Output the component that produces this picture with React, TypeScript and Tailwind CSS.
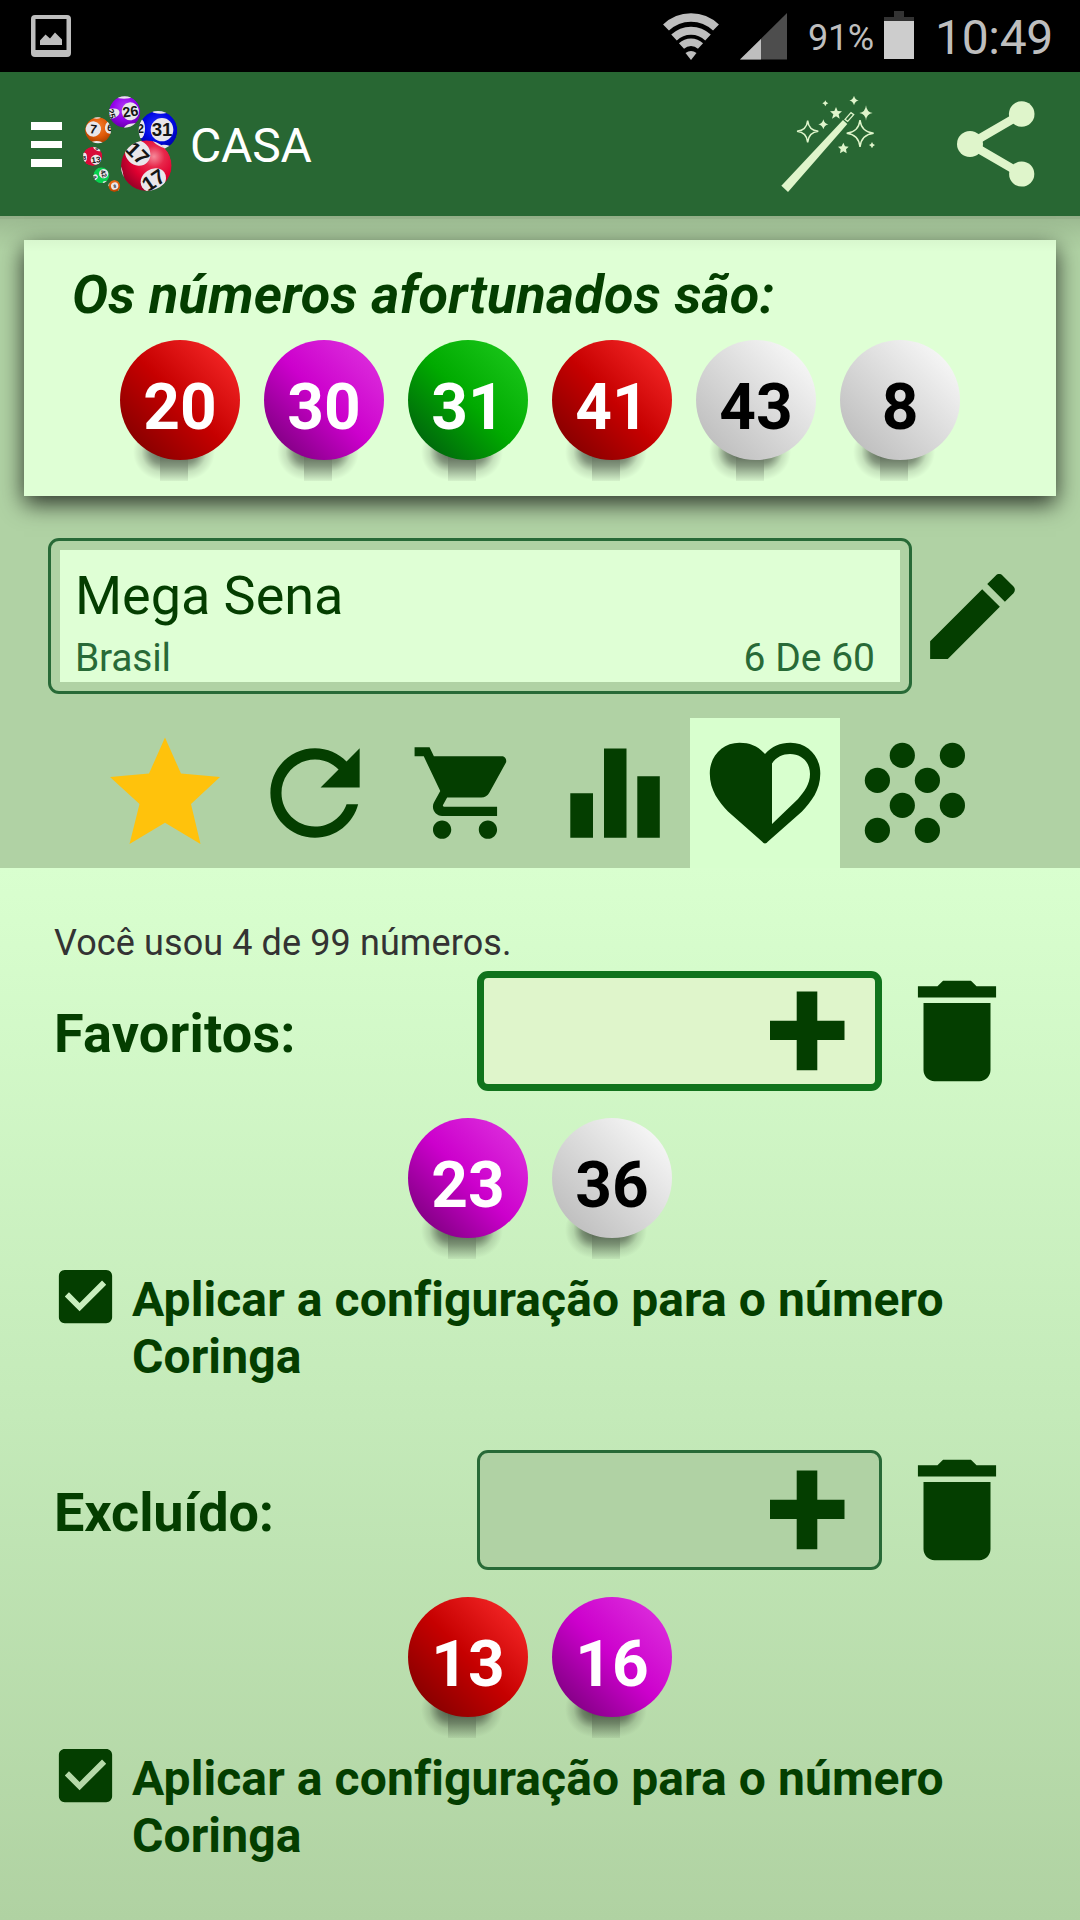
import React from "react";

type BallColor = "red" | "magenta" | "green" | "white";

const ballFill: Record<BallColor, string> = {
  red: "bg-[linear-gradient(45deg,#730000_0%,#c60000_50%,#ff3030_100%)] text-white",
  magenta: "bg-[linear-gradient(45deg,#6c006e_0%,#cc00cc_50%,#e038e0_100%)] text-white",
  green: "bg-[linear-gradient(45deg,#005210_0%,#00aa00_50%,#20cc20_100%)] text-white",
  white: "bg-[linear-gradient(45deg,#b6b6b6_0%,#dadada_50%,#ffffff_100%)] text-black",
};

function BallShadowDefs() {
  return (
    <svg className="absolute h-0 w-0" aria-hidden="true">
      <defs>
        <linearGradient id="shadeMid" x1="0" y1="0" x2="0" y2="1">
          <stop offset="0" stopColor="#000" stopOpacity="0.6" />
          <stop offset="0.45" stopColor="#000" stopOpacity="0.4" />
          <stop offset="1" stopColor="#000" stopOpacity="0.05" />
        </linearGradient>
        <radialGradient id="shadeLeft" gradientUnits="userSpaceOnUse" cx="41" cy="12" r="28">
          <stop offset="0" stopColor="#000" stopOpacity="0.6" />
          <stop offset="0.4" stopColor="#000" stopOpacity="0.4" />
          <stop offset="0.7" stopColor="#000" stopOpacity="0.12" />
          <stop offset="1" stopColor="#000" stopOpacity="0" />
        </radialGradient>
        <radialGradient id="shadeRight" gradientUnits="userSpaceOnUse" cx="67" cy="12" r="28">
          <stop offset="0" stopColor="#000" stopOpacity="0.6" />
          <stop offset="0.4" stopColor="#000" stopOpacity="0.4" />
          <stop offset="0.7" stopColor="#000" stopOpacity="0.12" />
          <stop offset="1" stopColor="#000" stopOpacity="0" />
        </radialGradient>
      </defs>
    </svg>
  );
}

function Ball({ n, color }: { n: number; color: BallColor }) {
  return (
    <div className="relative isolate size-[120px]">
      <svg className="absolute top-[100px] left-0 -z-10" width="120" height="41" viewBox="0 0 120 41">
        <rect x="0" y="0" width="40" height="41" fill="url(#shadeLeft)" />
        <rect x="40" y="14" width="28" height="27" fill="url(#shadeMid)" />
        <rect x="68" y="0" width="52" height="41" fill="url(#shadeRight)" />
      </svg>
      <div className={"size-[120px] rounded-full text-center text-[64px] leading-[136px] font-bold " + ballFill[color]}>
        {n}
      </div>
    </div>
  );
}

function StatusBar() {
  return (
    <div className="flex h-[72px] items-start bg-black text-[#bebebe]">
      <svg className="mt-[15px] ml-[31px]" width="40" height="42" viewBox="0 0 40 42">
        <path
          fill="currentColor"
          fillRule="evenodd"
          d="M4 0h32a4 4 0 0 1 4 4v34a4 4 0 0 1-4 4H4a4 4 0 0 1-4-4V4a4 4 0 0 1 4-4zM4.500 4v31h31V4zM9 30v-4.500l5.500-6 4.500 4 5-6 7 7V30z"
        />
      </svg>
      <svg className="mt-3 ml-[592px]" width="56" height="48" viewBox="0 0 56 48">
        <g fill="none" stroke="currentColor">
          <path d="M3 15.500a36 36 0 0 1 50 0" strokeWidth="8.500" />
          <path d="M11 25.500a24.500 24.500 0 0 1 34 0" strokeWidth="8" />
          <path d="M18.500 34a14 14 0 0 1 19 0" strokeWidth="7.500" />
        </g>
        <path fill="currentColor" d="M28 48l-5.500-7a9 9 0 0 1 11 0z" />
      </svg>
      <svg className="mt-[13px] ml-[21px]" width="47" height="47" viewBox="0 0 47 47">
        <path fill="#4d4d4d" d="M47 0v46.500H0z" />
        <path fill="#bebebe" d="M21 26v20.500H0z" />
      </svg>
      <div className="mt-[17px] ml-[21px] w-[66px] text-[36px] leading-[42px] tracking-[-0.300px] whitespace-nowrap">91%</div>
      <svg className="mt-[11px] ml-[10px]" width="30" height="48" viewBox="0 0 30 48">
        <path fill="#333" d="M10 0h10v6h10v4H0V6h10z" />
        <path fill="#cdcdcd" d="M0 10h30v38H0z" />
      </svg>
      <div className="mt-[10px] ml-[21px] text-[48px] leading-[56px] tracking-[-0.300px] whitespace-nowrap">10:49</div>
    </div>
  );
}

function LogoBall({
  cx,
  cy,
  r,
  fill,
  spots,
}: {
  cx: number;
  cy: number;
  r: number;
  fill: string;
  spots: { x: number; y: number; rx: number; ry: number; rot?: number; t?: string; size?: number }[];
}) {
  const id = "clip" + cx;
  return (
    <g>
      <clipPath id={id}>
        <circle cx={cx} cy={cy} r={r} />
      </clipPath>
      <g clipPath={`url(#${id})`}>
        <circle cx={cx} cy={cy} r={r} fill={fill} />
        {spots.map((s, i) => (
          <g key={i} transform={`translate(${s.x} ${s.y}) rotate(${s.rot ?? 0})`}>
            <ellipse rx={s.rx} ry={s.ry} fill="#e9e6ea" />
            {s.t && (
              <text
                y={(s.size ?? 20) * 0.36}
                textAnchor="middle"
                fontSize={s.size}
                fontWeight="700"
                fill="#151515"
                fontFamily="Liberation Sans, sans-serif"
              >
                {s.t}
              </text>
            )}
          </g>
        ))}
      </g>
    </g>
  );
}

function Logo() {
  return (
    <svg width="104" height="104" viewBox="0 0 312 312">
      <defs>
        <radialGradient id="gRed" cx="0.65" cy="0.32" r="0.7">
          <stop offset="0" stopColor="#f58a9a" />
          <stop offset="0.3" stopColor="#e8274a" />
          <stop offset="0.65" stopColor="#df0030" />
          <stop offset="1" stopColor="#a00028" />
        </radialGradient>
        <radialGradient id="gBlue" cx="0.5" cy="0.4" r="0.62">
          <stop offset="0" stopColor="#2a35ff" />
          <stop offset="0.6" stopColor="#0008e4" />
          <stop offset="1" stopColor="#0000a0" />
        </radialGradient>
        <radialGradient id="gPurple" cx="0.5" cy="0.35" r="0.65">
          <stop offset="0" stopColor="#b23cf8" />
          <stop offset="0.6" stopColor="#9200ea" />
          <stop offset="1" stopColor="#6a00ae" />
        </radialGradient>
        <radialGradient id="gOrange" cx="0.5" cy="0.35" r="0.65">
          <stop offset="0" stopColor="#f58030" />
          <stop offset="0.6" stopColor="#e05a08" />
          <stop offset="1" stopColor="#a84000" />
        </radialGradient>
      </defs>
      <LogoBall cx={109} cy={282} r={18} fill="url(#gOrange)" spots={[
        { x: 110, y: 282, rx: 11, ry: 11, rot: -10, t: "8", size: 14 },
        { x: 91, y: 276, rx: 3, ry: 7 },
        { x: 126, y: 294, rx: 4, ry: 6, rot: 40 },
      ]} />
      <LogoBall cx={70} cy={250} r={24} fill="#08d050" spots={[
        { x: 77, y: 245, rx: 14, ry: 14, rot: 70, t: "42", size: 20 },
        { x: 50, y: 256, rx: 8, ry: 10, rot: 60, t: "4", size: 16 },
        { x: 82, y: 272, rx: 8, ry: 5 },
      ]} />
      <LogoBall cx={44} cy={193} r={29} fill="#d80a38" spots={[
        { x: 54, y: 203, rx: 16, ry: 15, rot: -8, t: "13", size: 25 },
        { x: 19, y: 196, rx: 8, ry: 14, t: "8", size: 18 },
        { x: 58, y: 168, rx: 13, ry: 8, rot: 30, t: "8", size: 16 },
      ]} />
      <LogoBall cx={60} cy={115} r={39} fill="url(#gOrange)" spots={[
        { x: 46, y: 111, rx: 23, ry: 23, rot: 8, t: "7", size: 38 },
        { x: 96, y: 106, rx: 15, ry: 19, rot: 10, t: "6", size: 30 },
        { x: 56, y: 155, rx: 19, ry: 8 },
        { x: 56, y: 76, rx: 12, ry: 4 },
      ]} />
      <LogoBall cx={140} cy={60} r={47} fill="url(#gPurple)" spots={[
        { x: 157, y: 58, rx: 26, ry: 27, rot: -8, t: "26", size: 43 },
        { x: 101, y: 65, rx: 15, ry: 24, rot: 75, t: "25", size: 27 },
        { x: 138, y: 15, rx: 22, ry: 5 },
        { x: 158, y: 102, rx: 20, ry: 7, rot: -15 },
      ]} />
      <LogoBall cx={240} cy={115} r={58} fill="url(#gBlue)" spots={[
        { x: 252, y: 113, rx: 34, ry: 35, t: "31", size: 56 },
        { x: 188, y: 110, rx: 13, ry: 29, t: "2", size: 36 },
        { x: 248, y: 59, rx: 25, ry: 6 },
        { x: 258, y: 168, rx: 22, ry: 10 },
      ]} />
      <LogoBall cx={205} cy={221} r={76} fill="url(#gRed)" spots={[
        { x: 179, y: 183, rx: 40, ry: 36, rot: 45, t: "17", size: 62 },
        { x: 226, y: 264, rx: 40, ry: 33, rot: -34, t: "17", size: 62 },
        { x: 128, y: 240, rx: 6, ry: 24, rot: -14 },
        { x: 246, y: 155, rx: 27, ry: 7, rot: 30 },
      ]} />
    </svg>
  );
}

function Wand() {
  return (
    <svg width="108" height="106" viewBox="0 0 324 318" fill="#dff5cb">
      <path d="M16 287L201 90l13 12L36 306z" />
      <path d="M207 88l18-20 8 6-18 20z" fill="none" stroke="#dff5cb" strokeWidth="4" />
      <path
        d="M95 92q3 29 32 32-29 3-32 33-3-30-32-33 29-3 32-32zM252 90q4 36 41 40-37 4-41 41-4-37-40-41 36-4 40-40z"
        fill="none"
        stroke="#dff5cb"
        strokeWidth="4.500"
      />
      <path d="M142 88q3 13 15 15-12 3-15 15-3-12-15-15 12-2 15-15zM234 17q3 12 14 14-11 3-14 15-3-12-14-15 11-2 14-14zM270 46q2 21 20 23-18 2-20 23-2-21-20-23 18-2 20-23zM148 31q2 8 9 9-7 1-9 9-2-8-9-9 7-1 9-9zM288 156q2 8 9 9-7 2-9 10-2-8-9-10 7-1 9-9z" />
      <path d="M180 51l5 12 13 1-10 9 3 13-11-7-12 7 4-13-10-9 13-1zM202 158l5 11 11 1-8 8 2 12-10-6-10 6 2-12-8-8 11-1z" />
    </svg>
  );
}

function AppBar() {
  return (
    <header className="relative z-10 flex h-36 items-start bg-[#286733] text-white">
      <div className="mt-[50px] ml-[31px] flex w-[31px] flex-col gap-[11px]">
        <span className="h-[7.500px] bg-white" />
        <span className="h-[7.500px] bg-white" />
        <span className="h-[7.500px] bg-white" />
      </div>
      <div className="mt-5 ml-4">
        <Logo />
      </div>
      <h1 className="mt-[46px] ml-[8px] w-[586px] text-[48px] leading-[56px] tracking-[-0.200px]">CASA</h1>
      <div className="mt-[18px]">
        <Wand />
      </div>
      <svg className="mt-[29px] ml-[73px]" width="78" height="86" viewBox="0 0 78 86">
        <path d="M64.700 13L13 43l51.700 30" fill="none" stroke="#dff5cb" strokeWidth="8.500" />
        <g fill="#dff5cb">
          <circle cx="64.700" cy="13" r="12.800" />
          <circle cx="13" cy="43" r="13" />
          <circle cx="64.700" cy="73" r="12.600" />
        </g>
      </svg>
      <div className="pointer-events-none absolute top-full left-0 h-[36px] w-full bg-[linear-gradient(to_bottom,rgba(0,0,0,0.12),rgba(0,0,0,0.04)_60%,rgba(0,0,0,0))]" />
      <div className="pointer-events-none absolute top-full left-0 h-[3px] w-full bg-black/5" />
    </header>
  );
}

function Tabs() {
  const cell = "flex h-[150px] w-[150px] items-center justify-center";
  return (
    <nav className="mt-6 ml-[90px] flex text-[#043e00]">
      <div className={cell}>
        <svg width="150" height="150" viewBox="0 0 150 150">
          <path fill="#ffc20c" d="M75 19.500L91 55.600 130 59 101 86 110.500 126 75 104.700 39.500 126 49.500 86 20 59 59 55.600z" />
        </svg>
      </div>
      <div className={cell}>
        <svg width="134" height="134" viewBox="0 0 24 24" fill="currentColor">
          <path d="M17.650 6.350C16.200 4.900 14.210 4 12 4c-4.420 0-7.990 3.580-7.990 8s3.570 8 7.990 8c3.730 0 6.840-2.550 7.730-6h-2.080c-.82 2.330-3.040 4-5.650 4-3.310 0-6-2.690-6-6s2.690-6 6-6c1.660 0 3.140.69 4.220 1.780L13 11h7V4l-2.350 2.350z" />
        </svg>
      </div>
      <div className={cell}>
        <svg width="110" height="110" viewBox="0 0 24 24" fill="currentColor">
          <path d="M7 18c-1.100 0-1.990.9-1.990 2S5.900 22 7 22s2-.9 2-2-.9-2-2-2zM1 2v2h2l3.600 7.590-1.350 2.450c-.16.280-.25.610-.25.960 0 1.100.9 2 2 2h12v-2H7.420c-.14 0-.25-.11-.25-.25l.03-.12.900-1.630h7.450c.75 0 1.410-.41 1.750-1.030l3.580-6.490c.08-.14.120-.31.120-.48 0-.55-.45-1-1-1H5.210l-.94-2H1zm16 16c-1.100 0-1.990.9-1.990 2s.89 2 1.990 2 2-.9 2-2-.9-2-2-2z" />
        </svg>
      </div>
      <div className={cell}>
        <svg width="150" height="150" viewBox="0 0 150 150" fill="currentColor">
          <path d="M30.300 75.200H53v44.600H30.300zM64 30.500h22.500v89.300H64zM97.300 58.300h22.500v61.500H97.300z" />
        </svg>
      </div>
      <div className={cell + " bg-[#d8ffce]"}>
        <svg width="150" height="150" viewBox="0 0 150 150" fill="currentColor">
          <path
            fillRule="evenodd"
            d="M75 36C68 28 60 24.700 49.500 24.700 32 24.700 19.800 38.500 19.800 55.500c0 17 9 28 18.200 38L72 123.500q3 4 6 0l34-30c9.200-10 18.300-21 18.300-38C130.300 38.500 118 24.700 100.500 24.700 90 24.700 82 28 75 36zM82 45.500C86 39 93 36 100 36c12 0 20 8.500 20 20 0 10-6 18-12 25L82 106z"
          />
        </svg>
      </div>
      <div className={cell}>
        <svg width="150" height="150" viewBox="0 0 150 150" fill="currentColor">
          <circle cx="62.300" cy="37.400" r="12.600" />
          <circle cx="112.400" cy="37.400" r="12.600" />
          <circle cx="37.400" cy="62.400" r="12.600" />
          <circle cx="87.400" cy="62.400" r="12.600" />
          <circle cx="62.300" cy="87.400" r="12.600" />
          <circle cx="112.400" cy="87.400" r="12.600" />
          <circle cx="37.400" cy="112.400" r="12.600" />
          <circle cx="87.400" cy="112.400" r="12.600" />
        </svg>
      </div>
    </nav>
  );
}

function NumberGroup({
  label,
  labelClass,
  focused,
  balls,
}: {
  label: string;
  labelClass: string;
  focused: boolean;
  balls: { n: number; color: BallColor }[];
}) {
  return (
    <section className="h-[479px] text-[#043e00]">
      <div className="flex h-[120px] pl-[54px]">
        <div className={"w-[423px] pt-[3px] text-[54px] leading-[120px] font-bold " + labelClass}>{label}</div>
        <div
          className={
            "flex h-[120px] w-[405px] justify-end rounded-[11px] " +
            (focused ? "border-[7px] border-[#10731c] bg-[#dff5cb] pt-[13px] pr-[30px]" : "border-[3px] border-[#286a37] bg-[#b0d2a4] pt-[17px] pr-[34px]")
          }
        >
          <svg width="75" height="80" viewBox="0 0 75 80" fill="currentColor">
            <path d="M26.700.4h20.600v29.300H74.500v19.300H47.300v30.300H26.700V49H-.3V29.700h27z" />
          </svg>
        </div>
        <svg className="-mt-[7px] ml-[8px] shrink-0" width="134" height="134" viewBox="0 0 24 24" fill="currentColor">
          <path d="M6 19c0 1.100.9 2 2 2h8c1.100 0 2-.9 2-2V7H6v12zM19 4h-3.500l-1-1h-5l-1 1H5v2h14V4z" />
        </svg>
      </div>
      <div className="mt-[27px] flex justify-center gap-6">
        {balls.map((b) => (
          <Ball key={b.n} n={b.n} color={b.color} />
        ))}
      </div>
      <div className="mt-[23px] flex pl-[50px]">
        <svg width="71" height="71" viewBox="0 0 24 24" fill="currentColor">
          <path d="M19 3H5c-1.110 0-2 .9-2 2v14c0 1.100.89 2 2 2h14c1.110 0 2-.9 2-2V5c0-1.100-.89-2-2-2zm-9 14l-5-5 1.410-1.410L10 14.170l7.590-7.590L19 8l-9 9z" />
        </svg>
        <p className="mt-[10px] ml-[11px] w-[860px] text-[48px] leading-[57px] font-bold tracking-[0.090px] [font-variant-ligatures:common-ligatures]">
          Aplicar a configuração para o número
          <br />
          Coringa
        </p>
      </div>
    </section>
  );
}

const drawn: { n: number; color: BallColor }[] = [
  { n: 20, color: "red" },
  { n: 30, color: "magenta" },
  { n: 31, color: "green" },
  { n: 41, color: "red" },
  { n: 43, color: "white" },
  { n: 8, color: "white" },
];

export default function App() {
  return (
    <div className="h-[1920px] w-[1080px] overflow-hidden bg-[#b0d2a4] font-['Roboto',sans-serif]">
      <BallShadowDefs />
      <StatusBar />
      <AppBar />
      <div className="h-[652px] pt-6">
        <div className="mx-6 h-64 bg-[#dfffd5] shadow-[0_8px_22px_rgba(0,0,0,0.75)]">
          <h2 className="pt-[23px] pl-12 text-[54px] leading-[64px] font-bold tracking-[0.220px] whitespace-nowrap text-[#043e00] italic">
            Os números afortunados são:
          </h2>
          <div className="mt-[13px] flex justify-center gap-6">
            {drawn.map((b) => (
              <Ball key={b.n} n={b.n} color={b.color} />
            ))}
          </div>
        </div>
        <div className="mt-[42px] flex pl-12">
          <div className="h-[156px] w-[864px] rounded-[11px] border-[3px] border-[#286a37] p-[9px]">
            <div className="h-[132px] bg-[#dfffd5] pr-[25px] pl-[15px]">
              <div className="pt-[14px] text-[54px] leading-[64px] tracking-[-0.050px] text-[#043e00]">Mega Sena</div>
              <div className="flex justify-between text-[39px] leading-[61px] text-[#286a37]">
                <span className="tracking-[-0.200px]">Brasil</span>
                <span>6 De 60</span>
              </div>
            </div>
          </div>
          <svg className="mt-[22px] ml-[4px] text-[#043e00]" width="113" height="113" viewBox="0 0 24 24" fill="currentColor">
            <path d="M3 17.250V21h3.750L17.810 9.940l-3.750-3.750L3 17.250zM20.710 7.040c.39-.39.39-1.020 0-1.410l-2.340-2.340c-.39-.39-1.020-.39-1.410 0l-1.830 1.830 3.750 3.750 1.830-1.830z" />
          </svg>
        </div>
        <Tabs />
      </div>
      <main className="h-[1052px] bg-[linear-gradient(to_bottom,#d9ffcf,#c4eab9_52%,#b0d2a2)]">
        <p className="pt-[54px] pl-[54px] text-[36px] leading-[42px] tracking-[0.100px] text-[#333]">Você usou 4 de 99 números.</p>
        <div className="mt-[7px]">
          <NumberGroup label="Favoritos:" labelClass="tracking-[0.200px]" focused balls={[{ n: 23, color: "magenta" }, { n: 36, color: "white" }]} />
          <NumberGroup label="Excluído:" labelClass="tracking-[-0.100px]" focused={false} balls={[{ n: 13, color: "red" }, { n: 16, color: "magenta" }]} />
        </div>
      </main>
    </div>
  );
}
